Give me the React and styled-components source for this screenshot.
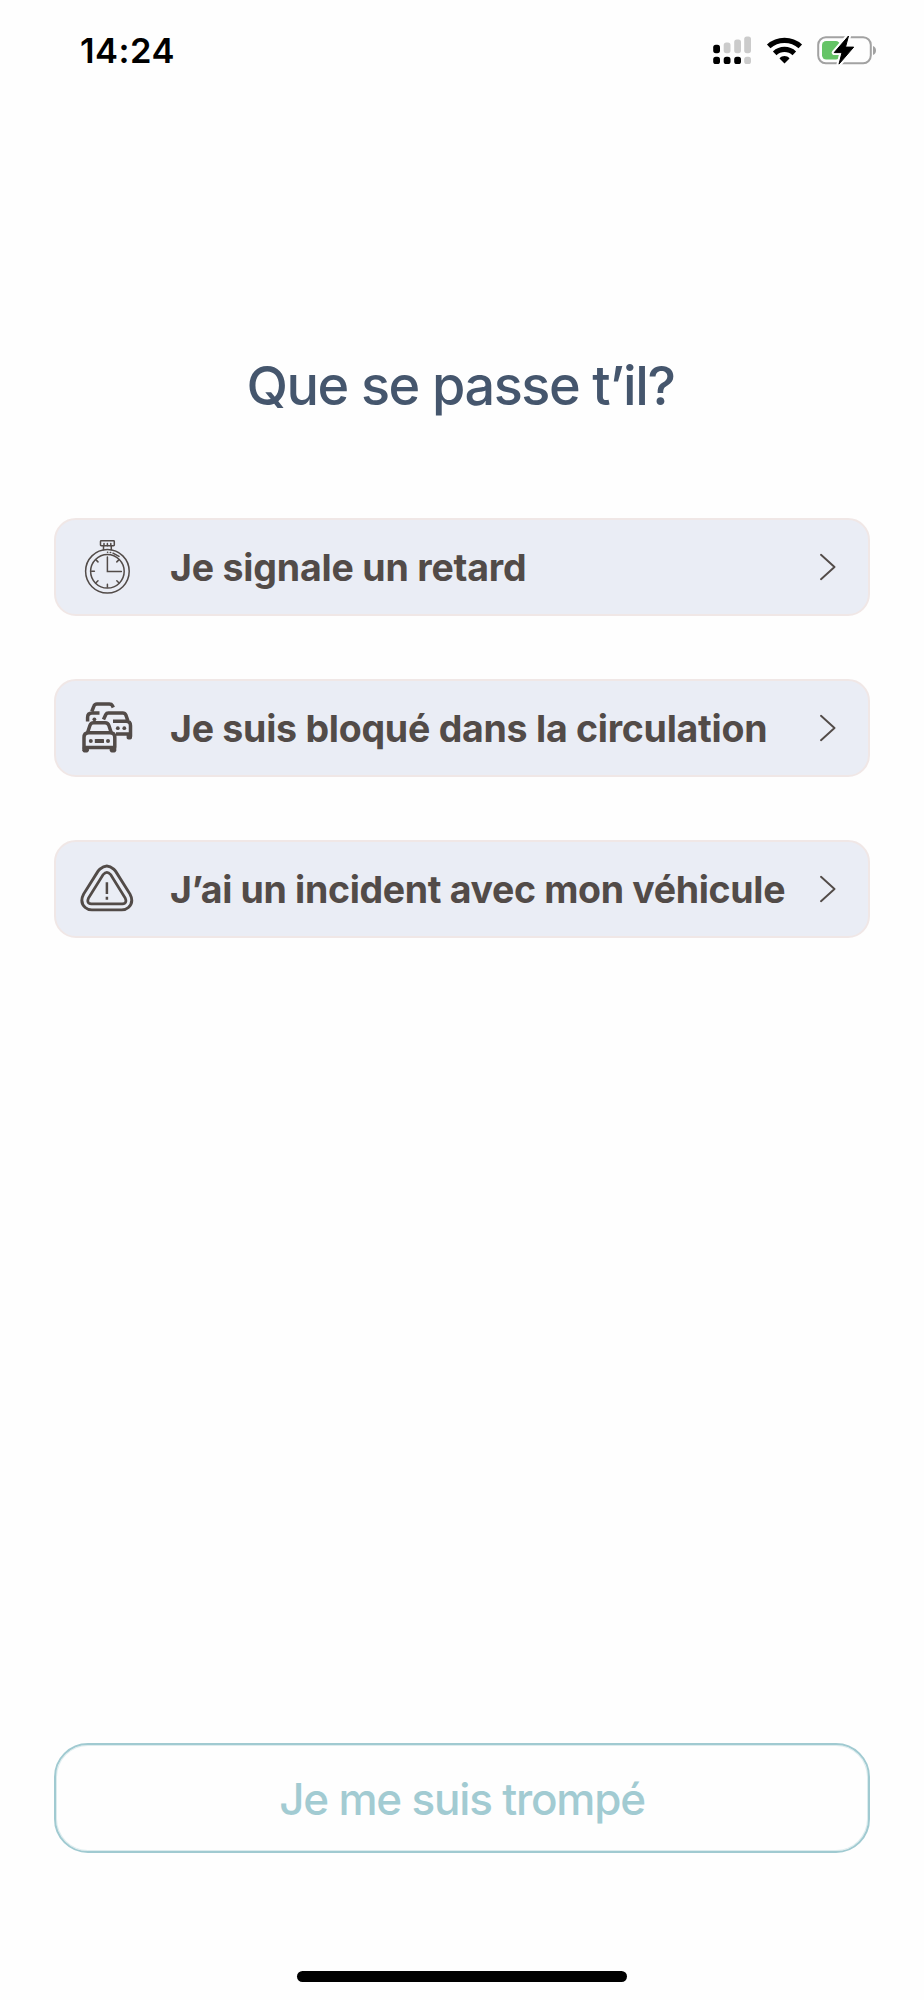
import React from "react";
import styled, { createGlobalStyle } from "styled-components";

const GlobalStyle = createGlobalStyle`
  * { box-sizing: border-box; }
  body { margin: 0; background: #fefefe; }
`;

const Screen = styled.main`
  display: flex;
  flex-direction: column;
  align-items: center;
  width: 924px;
  height: 2000px;
  padding-bottom: 18px;
  overflow: hidden;
  background: #fefefe;
  font-family: Inter, "Liberation Sans", sans-serif;
`;

const StatusBar = styled.header`
  display: flex;
  justify-content: space-between;
  align-items: flex-start;
  width: 100%;
  height: 100px;
  padding: 30px 48px 0 80px;
`;

const Clock = styled.time`
  font-size: 34.5px;
  font-weight: 600;
  line-height: 42px;
  letter-spacing: 0.5px;
  color: #000;
`;

const StatusIcons = styled.div`
  display: flex;
  gap: 14px;
  height: 40px;

  svg { display: block; }
`;

const Title = styled.h1`
  margin: 253px 0 0;
  padding-right: 3px;
  height: 66px;
  font-size: 54px;
  font-weight: 550;
  line-height: 66px;
  letter-spacing: -1.4px;
  white-space: nowrap;
  color: #45566d;
`;

const Options = styled.nav`
  display: flex;
  flex-direction: column;
  gap: 62.6px;
  width: 816px;
  margin-top: 99px;
`;

const OptionButton = styled.button`
  display: flex;
  align-items: center;
  width: 100%;
  height: 98.3px;
  padding: 0 32px 0 23px;
  border: 2px solid #f0e7e6;
  border-radius: 22px;
  background: #eaedf5;
  color: #524b48;
  font-family: inherit;
  text-align: left;

  svg { display: block; flex: none; }
`;

const OptionLabel = styled.span`
  flex: 1;
  margin-left: 35px;
  padding-top: 2px;
  font-size: 37.5px;
  font-weight: 700;
  line-height: 48px;
  letter-spacing: ${(p) => p.$tracking}px;
  white-space: nowrap;
`;

const CancelButton = styled.button`
  width: 816px;
  height: 110px;
  margin-top: auto;
  padding: 2px 0 0;
  border: 2px solid #a0cad1;
  border-radius: 34px;
  box-shadow: inset 0 0 0 1px rgba(160, 202, 209, 0.35);
  background: #fefefe;
  color: #a2cbd2;
  font-family: inherit;
  font-size: 44px;
  font-weight: 550;
  letter-spacing: -1.2px;
`;

const HomeIndicator = styled.div`
  width: 330px;
  height: 11px;
  margin-top: 118px;
  border-radius: 6px;
  background: #000;
`;

const Signal = () => (
  <svg width="40" height="40" viewBox="711 30 40 40">
    <g fill="#cbcbcb">
      <rect x="723.7" y="42.5" width="6.8" height="10.7" rx="2.6" />
      <rect x="734.2" y="39.4" width="6.8" height="13.8" rx="2.6" />
      <rect x="744.2" y="36.5" width="6.8" height="16.7" rx="2.6" />
      <rect x="744.2" y="56.8" width="6.8" height="7.2" rx="2.6" />
    </g>
    <rect x="713.2" y="44.8" width="6.8" height="8.4" rx="2.6" />
    <rect x="713.2" y="56.8" width="6.8" height="7.2" rx="2.6" />
    <rect x="723.7" y="56.8" width="6.8" height="7.2" rx="2.6" />
    <rect x="734.2" y="56.8" width="6.8" height="7.2" rx="2.6" />
  </svg>
);

const Wifi = () => (
  <svg width="38" height="40" viewBox="765.500 30 38 40">
    <g fill="none" stroke="#000" strokeWidth="5.2">
      <path d="M769.2 46.4a23.5 23.5 0 0 1 31.6 0" />
      <path d="M775.2 53.3a14.2 14.2 0 0 1 19.6 0" />
    </g>
    <path d="M785 63.6l-5-5.2c2.6-3.2 7.4-3.2 10 0z" />
  </svg>
);

const Battery = () => (
  <svg width="59" height="40" viewBox="817 30 59 40">
    <rect x="818.2" y="37.2" width="52.6" height="26" rx="7.6" fill="none" stroke="#a2a2a2" strokeWidth="2" />
    <path d="M873 46v9c4-1.500 4-7.500 0-9z" fill="#a2a2a2" />
    <rect x="822" y="41" width="18" height="18.400" rx="4.200" fill="#65c466" />
    <path d="M848.500 36l-14.300 16.600h7.800l-3 11.500 14.700-17h-8.200z" fill="#000" stroke="#fefefe" strokeWidth="5" strokeLinejoin="round" />
    <path d="M848.500 36l-14.300 16.600h7.800l-3 11.500 14.700-17h-8.200z" fill="#000" stroke="#000" strokeLinejoin="round" />
  </svg>
);

const Stopwatch = () => (
  <svg width="56" height="56" viewBox="79 539 56 56" fill="none" stroke="#524b48" strokeWidth="1.500" strokeLinecap="round">
    <circle cx="107.400" cy="571.300" r="21.800" />
    <circle cx="107.400" cy="571.300" r="16.800" />
    <rect x="100.500" y="540.800" width="13.800" height="5" rx=".7" />
    <path d="M103.500 546v3.800M111.300 546v3.800M104 543.500v2.300M107.400 543.500v2.300M110.800 543.500v2.300" />
    <path d="M107.400 557v14.400h14" />
    <path d="M107.400 584.300v2.800M91.600 571.300h2.800M96 559.900l2 2M118.800 559.900l-2 2M96 582.700l2-2M118.800 582.700l-2-2" />
    <path d="M107.500 552.200h.2M110.300 552.400h.4M113 553.200l6 3.200" />
  </svg>
);

const Traffic = () => (
  <svg width="56" height="56" viewBox="79 700 56 56" fill="none" stroke="#524b48" strokeWidth="3.500" strokeLinecap="round" strokeLinejoin="round">
    <g strokeLinecap="butt">
      <path d="M113.300 707.500l-1-2.100c-.6-1.300-1.500-1.500-3-1.500H97c-2 0-2.600.6-3.200 2.400l-2 5.200" />
      <path d="M87.600 721.500v-4c0-3.200 1.400-4.600 4.400-4.600h7.500" />
      <path d="M103.500 719.500l2.300-5c.6-1.200 1.300-1.500 2.500-1.500h14.500c1.700 0 2.400.5 3 1.900l2 5.600M113 721.200h13.200c2.800 0 4.300 1.600 4.300 4.500v11M116 734h14" />
    </g>
    <path d="M128.400 735.500v2.200M130.200 735.500v2.200" strokeWidth="3.600" />
    <path d="M87.600 732.500l2.300-7c.7-2 1.600-2.700 3.700-2.700h11.600c2.100 0 3 .7 3.700 2.700l2.300 7" />
    <path d="M84 747v-9.500c0-3.200 1.600-4.700 4.600-4.700h21.600c3 0 4.600 1.500 4.600 4.700v9.500M84 747.500h30.600" />
    <path d="M85.600 747.500v3.500M113 747.500v3.500" strokeWidth="6.600" strokeLinecap="butt" />
    <path d="M84.300 750.800h2.600M111.700 750.800h2.600" />
    <g fill="#524b48" stroke="none">
      <circle cx="90.800" cy="741" r="2" />
      <circle cx="108" cy="741" r="2" />
      <rect x="94.800" y="739" width="9.200" height="4" rx=".6" />
      <circle cx="94.400" cy="719.300" r="1.900" />
      <circle cx="117.800" cy="728.200" r="1.900" />
      <circle cx="124.300" cy="728.200" r="1.900" />
    </g>
  </svg>
);

const Warning = () => (
  <svg width="56" height="56" viewBox="79.500 860.500 56 56" fill="none" stroke="#524b48">
    <path strokeWidth="2.900" d="M100.400 868.600q7-6.400 13.800 0q1.200 1.100 2 2.300l14.300 22.700q4.200 8-1.600 13.400q-2.600 2.400-6.700 2.400H92.400q-4.100 0-6.700-2.400q-5.800-5.400-1.600-13.400l14.300-22.700q.8-1.200 2-2.300z" />
    <path strokeWidth="2.700" strokeLinejoin="round" d="M103.700 874q3.700-4.400 7.400 0l14.700 23.700q1.400 3.400-.4 4.900q-1 .7-2.500.7H91.800q-1.500 0-2.500-.7q-1.800-1.500-.4-4.900z" />
    <path strokeWidth="2.500" d="M107.400 881.800v11.700M107.400 896.300v3" />
  </svg>
);

const Chevron = () => (
  <svg width="16" height="28" viewBox="0 0 16 28" fill="none" stroke="#524b48" strokeWidth="1.900" strokeLinecap="round" strokeLinejoin="round">
    <path d="M1 1.800L14.500 14 1 26.200" />
  </svg>
);

const options = [
  { Icon: Stopwatch, label: "Je signale un retard", tracking: -0.2 },
  { Icon: Traffic, label: "Je suis bloqué dans la circulation", tracking: -0.26 },
  { Icon: Warning, label: "J’ai un incident avec mon véhicule", tracking: -0.34 },
];

export default function App() {
  return (
    <>
      <GlobalStyle />
      <Screen>
        <StatusBar>
          <Clock>14:24</Clock>
          <StatusIcons>
            <Signal />
            <Wifi />
            <Battery />
          </StatusIcons>
        </StatusBar>
        <Title>Que se passe t’il?</Title>
        <Options>
          {options.map(({ Icon, label, tracking }) => (
            <OptionButton key={label} type="button">
              <Icon />
              <OptionLabel $tracking={tracking}>{label}</OptionLabel>
              <Chevron />
            </OptionButton>
          ))}
        </Options>
        <CancelButton type="button">Je me suis trompé</CancelButton>
        <HomeIndicator />
      </Screen>
    </>
  );
}
